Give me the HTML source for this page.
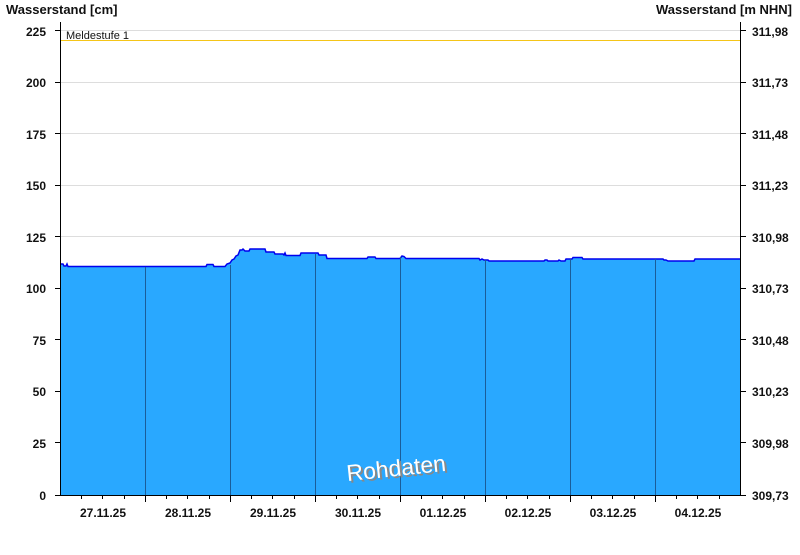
<!DOCTYPE html>
<html><head><meta charset="utf-8"><style>
html,body{margin:0;padding:0;background:#fff;}
svg text{font-family:"Liberation Sans",Arial,sans-serif;}
</style></head><body>
<svg width="800" height="550" xmlns="http://www.w3.org/2000/svg">
<rect width="800" height="550" fill="#fff"/>
<text x="6" y="14" font-size="13" font-weight="bold" fill="#111">Wasserstand [cm]</text>
<text x="792" y="14" font-size="13" font-weight="bold" fill="#111" text-anchor="end">Wasserstand [m NHN]</text>
<g stroke="#dddddd" stroke-width="1">
<line x1="61" x2="740" y1="30.5" y2="30.5"/>
<line x1="61" x2="740" y1="82.5" y2="82.5"/>
<line x1="61" x2="740" y1="133.5" y2="133.5"/>
<line x1="61" x2="740" y1="185.5" y2="185.5"/>
<line x1="61" x2="740" y1="236.5" y2="236.5"/>
<line x1="61" x2="740" y1="288.5" y2="288.5"/>
<line x1="61" x2="740" y1="339.5" y2="339.5"/>
<line x1="61" x2="740" y1="391.5" y2="391.5"/>
<line x1="61" x2="740" y1="442.5" y2="442.5"/>
</g>
<line x1="61" x2="740" y1="40.5" y2="40.5" stroke="#f5c518" stroke-width="1"/>
<text x="66" y="39" font-size="11" fill="#111">Meldestufe 1</text>
<path id="wl" fill="none" d="M61,264 L63,264 L64,266 L66,266 L67,264 L68,266.5 L206,266.5 L207,264.5 L213,264.5 L214,266.5 L225,266.5 L227,264 L230,263 L232,260 L234,259 L236,256 L238,255 L240,250 L242,250 L243,249 L245,251 L249,251 L250,249 L265,249 L266,252 L274,252 L275,254 L283,254 L284,255 L285,253 L286,255.5 L300,255.5 L301,253 L318,253 L319,255 L326,255 L327,258.5 L367,258.5 L368,257 L375,257 L376,258.5 L400,258.5 L402,256 L404,256.5 L406,258.5 L479,258.5 L480,260 L482,259 L484,260 L488,260 L489,261 L544,261 L545,260 L547,260 L548,261 L558,261 L559,260 L561,261 L565,261 L566,259 L572,259 L573,257.5 L582,257.5 L583,259 L663,259 L664,260 L666,260 L668,261 L694,261 L695,259 L740,259"/>
<path fill="#29a8ff" d="M61,495 L61,264 L63,264 L64,266 L66,266 L67,264 L68,266.5 L206,266.5 L207,264.5 L213,264.5 L214,266.5 L225,266.5 L227,264 L230,263 L232,260 L234,259 L236,256 L238,255 L240,250 L242,250 L243,249 L245,251 L249,251 L250,249 L265,249 L266,252 L274,252 L275,254 L283,254 L284,255 L285,253 L286,255.5 L300,255.5 L301,253 L318,253 L319,255 L326,255 L327,258.5 L367,258.5 L368,257 L375,257 L376,258.5 L400,258.5 L402,256 L404,256.5 L406,258.5 L479,258.5 L480,260 L482,259 L484,260 L488,260 L489,261 L544,261 L545,260 L547,260 L548,261 L558,261 L559,260 L561,261 L565,261 L566,259 L572,259 L573,257.5 L582,257.5 L583,259 L663,259 L664,260 L666,260 L668,261 L694,261 L695,259 L740,259 L740,495 Z"/>
<use href="#wl" stroke="#0000ee" stroke-width="1.5"/>
<g stroke="#1a5d99" stroke-width="1">
<line x1="145.5" x2="145.5" y1="267" y2="495"/>
<line x1="230.5" x2="230.5" y1="265" y2="495"/>
<line x1="315.5" x2="315.5" y1="254" y2="495"/>
<line x1="400.5" x2="400.5" y1="257" y2="495"/>
<line x1="485.5" x2="485.5" y1="260" y2="495"/>
<line x1="570.5" x2="570.5" y1="259" y2="495"/>
<line x1="655.5" x2="655.5" y1="259" y2="495"/>
</g>
<text x="348" y="478" font-size="23" fill="#888" transform="rotate(-6 396 466)">Rohdaten</text>
<text x="346" y="476" font-size="23" fill="#fff" transform="rotate(-6 396 466)">Rohdaten</text>
<g stroke="#000" stroke-width="1">
<line x1="60.5" x2="60.5" y1="22" y2="495"/>
<line x1="740.5" x2="740.5" y1="22" y2="495"/>
<line x1="55" x2="746" y1="495.5" y2="495.5"/>
<line x1="55" x2="61" y1="30.5" y2="30.5"/><line x1="740" x2="746" y1="30.5" y2="30.5"/>
<line x1="55" x2="61" y1="82.5" y2="82.5"/><line x1="740" x2="746" y1="82.5" y2="82.5"/>
<line x1="55" x2="61" y1="133.5" y2="133.5"/><line x1="740" x2="746" y1="133.5" y2="133.5"/>
<line x1="55" x2="61" y1="185.5" y2="185.5"/><line x1="740" x2="746" y1="185.5" y2="185.5"/>
<line x1="55" x2="61" y1="236.5" y2="236.5"/><line x1="740" x2="746" y1="236.5" y2="236.5"/>
<line x1="55" x2="61" y1="288.5" y2="288.5"/><line x1="740" x2="746" y1="288.5" y2="288.5"/>
<line x1="55" x2="61" y1="339.5" y2="339.5"/><line x1="740" x2="746" y1="339.5" y2="339.5"/>
<line x1="55" x2="61" y1="391.5" y2="391.5"/><line x1="740" x2="746" y1="391.5" y2="391.5"/>
<line x1="55" x2="61" y1="442.5" y2="442.5"/><line x1="740" x2="746" y1="442.5" y2="442.5"/>
<line x1="145.5" x2="145.5" y1="495" y2="502"/>
<line x1="230.5" x2="230.5" y1="495" y2="502"/>
<line x1="315.5" x2="315.5" y1="495" y2="502"/>
<line x1="400.5" x2="400.5" y1="495" y2="502"/>
<line x1="485.5" x2="485.5" y1="495" y2="502"/>
<line x1="570.5" x2="570.5" y1="495" y2="502"/>
<line x1="655.5" x2="655.5" y1="495" y2="502"/>
</g>
<g stroke="#000" stroke-width="1">
<path d="M81.5,495v4M102.5,495v4M124.5,495v4M166.5,495v4M187.5,495v4M209.5,495v4M251.5,495v4M272.5,495v4M294.5,495v4M336.5,495v4M357.5,495v4M379.5,495v4M421.5,495v4M442.5,495v4M464.5,495v4M506.5,495v4M527.5,495v4M549.5,495v4M591.5,495v4M612.5,495v4M634.5,495v4M676.5,495v4M697.5,495v4M719.5,495v4"/>
</g>
<g font-size="12" font-weight="bold" fill="#111" text-anchor="end">
<text x="46" y="36">225</text><text x="46" y="87">200</text><text x="46" y="139">175</text>
<text x="46" y="190">150</text><text x="46" y="242">125</text><text x="46" y="293">100</text>
<text x="46" y="345">75</text><text x="46" y="396">50</text><text x="46" y="448">25</text><text x="46" y="500">0</text>
</g>
<g font-size="12" font-weight="bold" fill="#111">
<text x="752" y="36">311,98</text><text x="752" y="87">311,73</text><text x="752" y="139">311,48</text>
<text x="752" y="190">311,23</text><text x="752" y="242">310,98</text><text x="752" y="293">310,73</text>
<text x="752" y="345">310,48</text><text x="752" y="396">310,23</text><text x="752" y="448">309,98</text><text x="752" y="500">309,73</text>
</g>
<g font-size="12" font-weight="bold" fill="#111" text-anchor="middle">
<text x="103" y="517">27.11.25</text><text x="188" y="517">28.11.25</text><text x="273" y="517">29.11.25</text>
<text x="358" y="517">30.11.25</text><text x="443" y="517">01.12.25</text><text x="528" y="517">02.12.25</text>
<text x="613" y="517">03.12.25</text><text x="698" y="517">04.12.25</text>
</g>
</svg>
</body></html>
